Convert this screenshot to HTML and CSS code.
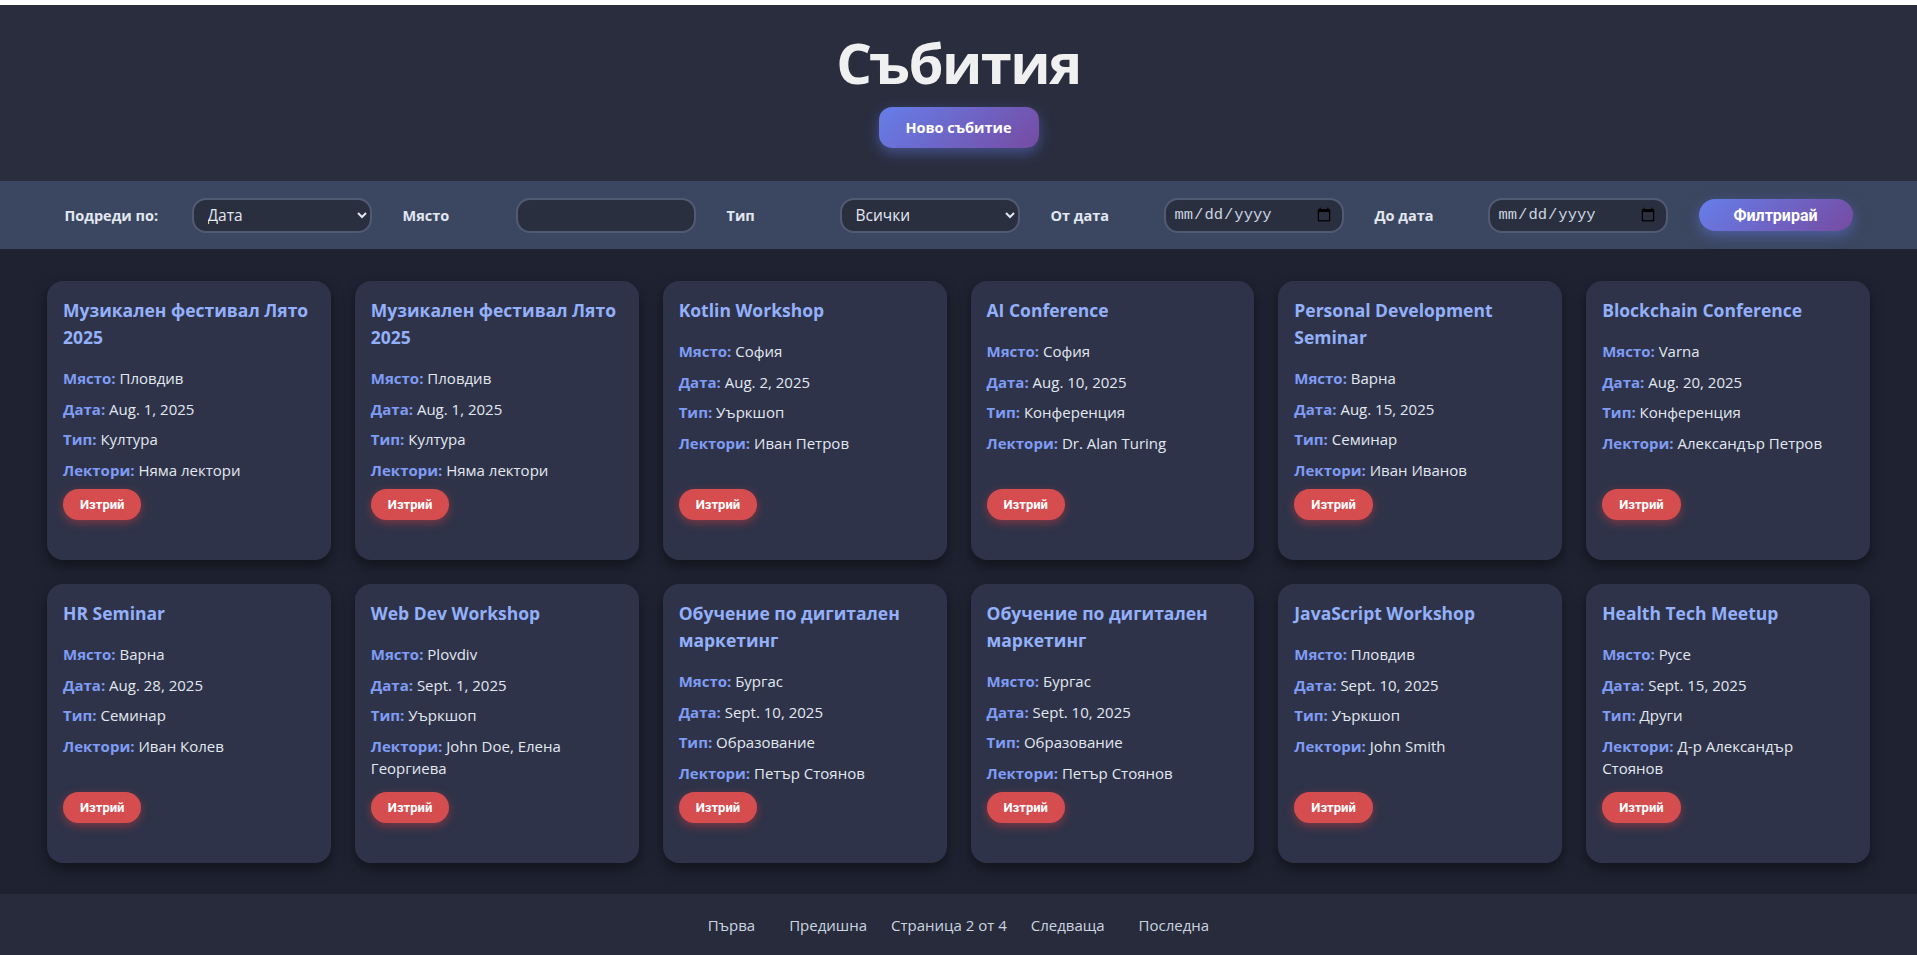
FILE: index.html
```html
<!DOCTYPE html>
<html lang="bg">
<head>
<meta charset="utf-8">
<title>Събития</title>
<link rel="stylesheet" href="styles.css">
</head>
<body>
<div class="page">
  <header class="hero">
    <h1 class="hero-title">Събития</h1>
    <button class="btn-gradient btn-new" type="button">Ново събитие</button>
  </header>

  <form class="filters">
    <label class="filter-label filter-label-first">Подреди по:</label>
    <select class="filter-field">
      <option>Дата</option>
    </select>
    <label class="filter-label">Място</label>
    <input class="filter-field" type="text">
    <label class="filter-label">Тип</label>
    <select class="filter-field">
      <option>Всички</option>
    </select>
    <label class="filter-label">От дата</label>
    <input class="filter-field filter-date" type="date">
    <label class="filter-label">До дата</label>
    <input class="filter-field filter-date" type="date">
    <button class="btn-gradient btn-filter" type="button">Филтрирай</button>
  </form>

  <main class="events">
    <article class="card">
      <h3 class="card-title">Музикален фестивал Лято 2025</h3>
      <p class="card-row"><b>Място:</b> Пловдив</p>
      <p class="card-row"><b>Дата:</b> Aug. 1, 2025</p>
      <p class="card-row"><b>Тип:</b> Култура</p>
      <p class="card-row"><b>Лектори:</b> Няма лектори</p>
      <button class="btn-delete" type="button">Изтрий</button>
    </article>
    <article class="card">
      <h3 class="card-title">Музикален фестивал Лято 2025</h3>
      <p class="card-row"><b>Място:</b> Пловдив</p>
      <p class="card-row"><b>Дата:</b> Aug. 1, 2025</p>
      <p class="card-row"><b>Тип:</b> Култура</p>
      <p class="card-row"><b>Лектори:</b> Няма лектори</p>
      <button class="btn-delete" type="button">Изтрий</button>
    </article>
    <article class="card">
      <h3 class="card-title">Kotlin Workshop</h3>
      <p class="card-row"><b>Място:</b> София</p>
      <p class="card-row"><b>Дата:</b> Aug. 2, 2025</p>
      <p class="card-row"><b>Тип:</b> Уъркшоп</p>
      <p class="card-row"><b>Лектори:</b> Иван Петров</p>
      <button class="btn-delete" type="button">Изтрий</button>
    </article>
    <article class="card">
      <h3 class="card-title">AI Conference</h3>
      <p class="card-row"><b>Място:</b> София</p>
      <p class="card-row"><b>Дата:</b> Aug. 10, 2025</p>
      <p class="card-row"><b>Тип:</b> Конференция</p>
      <p class="card-row"><b>Лектори:</b> Dr. Alan Turing</p>
      <button class="btn-delete" type="button">Изтрий</button>
    </article>
    <article class="card">
      <h3 class="card-title">Personal Development Seminar</h3>
      <p class="card-row"><b>Място:</b> Варна</p>
      <p class="card-row"><b>Дата:</b> Aug. 15, 2025</p>
      <p class="card-row"><b>Тип:</b> Семинар</p>
      <p class="card-row"><b>Лектори:</b> Иван Иванов</p>
      <button class="btn-delete" type="button">Изтрий</button>
    </article>
    <article class="card">
      <h3 class="card-title">Blockchain Conference</h3>
      <p class="card-row"><b>Място:</b> Varna</p>
      <p class="card-row"><b>Дата:</b> Aug. 20, 2025</p>
      <p class="card-row"><b>Тип:</b> Конференция</p>
      <p class="card-row"><b>Лектори:</b> Александър Петров</p>
      <button class="btn-delete" type="button">Изтрий</button>
    </article>

    <article class="card">
      <h3 class="card-title">HR Seminar</h3>
      <p class="card-row"><b>Място:</b> Варна</p>
      <p class="card-row"><b>Дата:</b> Aug. 28, 2025</p>
      <p class="card-row"><b>Тип:</b> Семинар</p>
      <p class="card-row"><b>Лектори:</b> Иван Колев</p>
      <button class="btn-delete" type="button">Изтрий</button>
    </article>
    <article class="card">
      <h3 class="card-title">Web Dev Workshop</h3>
      <p class="card-row"><b>Място:</b> Plovdiv</p>
      <p class="card-row"><b>Дата:</b> Sept. 1, 2025</p>
      <p class="card-row"><b>Тип:</b> Уъркшоп</p>
      <p class="card-row"><b>Лектори:</b> John Doe, Елена Георгиева</p>
      <button class="btn-delete" type="button">Изтрий</button>
    </article>
    <article class="card">
      <h3 class="card-title">Обучение по дигитален маркетинг</h3>
      <p class="card-row"><b>Място:</b> Бургас</p>
      <p class="card-row"><b>Дата:</b> Sept. 10, 2025</p>
      <p class="card-row"><b>Тип:</b> Образование</p>
      <p class="card-row"><b>Лектори:</b> Петър Стоянов</p>
      <button class="btn-delete" type="button">Изтрий</button>
    </article>
    <article class="card">
      <h3 class="card-title">Обучение по дигитален маркетинг</h3>
      <p class="card-row"><b>Място:</b> Бургас</p>
      <p class="card-row"><b>Дата:</b> Sept. 10, 2025</p>
      <p class="card-row"><b>Тип:</b> Образование</p>
      <p class="card-row"><b>Лектори:</b> Петър Стоянов</p>
      <button class="btn-delete" type="button">Изтрий</button>
    </article>
    <article class="card">
      <h3 class="card-title">JavaScript Workshop</h3>
      <p class="card-row"><b>Място:</b> Пловдив</p>
      <p class="card-row"><b>Дата:</b> Sept. 10, 2025</p>
      <p class="card-row"><b>Тип:</b> Уъркшоп</p>
      <p class="card-row"><b>Лектори:</b> John Smith</p>
      <button class="btn-delete" type="button">Изтрий</button>
    </article>
    <article class="card">
      <h3 class="card-title">Health Tech Meetup</h3>
      <p class="card-row"><b>Място:</b> Русе</p>
      <p class="card-row"><b>Дата:</b> Sept. 15, 2025</p>
      <p class="card-row"><b>Тип:</b> Други</p>
      <p class="card-row"><b>Лектори:</b> Д-р Александър Стоянов</p>
      <button class="btn-delete" type="button">Изтрий</button>
    </article>
  </main>

  <footer class="pager">
    <a class="pager-link" href="#">Първа</a>
    <a class="pager-link" href="#">Предишна</a>
    <span class="pager-current">Страница 2 от 4</span>
    <a class="pager-link" href="#">Следваща</a>
    <a class="pager-link" href="#">Последна</a>
  </footer>
</div>
</body>
</html>
```

FILE: styles.css
```css
html, body {
  margin: 0;
  padding: 0;
  background: #ffffff;
  overflow: hidden;
}

body {
  font-family: "Open Sans", "Noto Sans", sans-serif;
  color: #e2e8f0;
}

.page {
  margin-top: 5px;
  min-height: calc(100vh - 5px);
  display: flex;
  flex-direction: column;
  background: #1f2231;
}

/* ---------- header ---------- */
.hero {
  background: #292d3e;
  height: 176px;
  box-sizing: border-box;
  padding-top: 22px;
  display: flex;
  flex-direction: column;
  align-items: center;
}

.hero-title {
  margin: 0;
  font-size: 56px;
  line-height: 70px;
  font-weight: 700;
  color: #f0f0f0;
  letter-spacing: -1.5px;
}

.btn-gradient {
  border: none;
  color: #ffffff;
  font-family: "Open Sans", "Noto Sans", sans-serif;
  font-weight: 700;
  background: linear-gradient(135deg, #667eea 0%, #764ba2 100%);
  cursor: pointer;
}

.btn-new {
  margin-top: 10px;
  width: 160px;
  height: 41px;
  border-radius: 13px;
  font-size: 14.5px;
  box-shadow: 0 5px 14px rgba(102, 126, 234, 0.45);
}

/* ---------- filters ---------- */
.filters {
  background: #3b4660;
  height: 68px;
  display: flex;
  align-items: center;
  justify-content: center;
  gap: 31px;
}

.filter-label {
  width: 82px;
  font-size: 14.5px;
  font-weight: 700;
  color: #e2e8f0;
  white-space: nowrap;
}

.filter-label-first {
  width: 96px;
}

.filter-field {
  width: 180px;
  height: 35px;
  box-sizing: border-box;
  border: 2px solid #505b72;
  border-radius: 14px;
  background: #2a2f40;
  color: #e2e8f0;
  font-family: "Open Sans", "Noto Sans", sans-serif;
  font-size: 15.5px;
  padding: 0 10px;
  outline: none;
}

.filter-date {
  font-family: "Liberation Mono", "DejaVu Sans Mono", monospace;
  font-size: 15.5px;
  color: #cbd5e0;
  padding: 0 8px;
}

.btn-filter {
  width: 154px;
  height: 32px;
  border-radius: 16px;
  font-family: Roboto, "Liberation Sans", sans-serif;
  font-size: 16px;
  box-shadow: 0 5px 14px rgba(102, 126, 234, 0.45);
}

/* ---------- cards ---------- */
.events {
  display: grid;
  grid-template-columns: repeat(6, 1fr);
  gap: 24px;
  padding: 32px 47px 31px;
}

.card {
  background: #2e3349;
  border-radius: 16px;
  padding: 16px 16px 40px;
  display: flex;
  flex-direction: column;
  align-items: flex-start;
  box-shadow: 0 6px 14px rgba(0, 0, 0, 0.45);
}

.card-title {
  margin: 0 0 16px;
  font-size: 17.5px;
  line-height: 27px;
  font-weight: 700;
  color: #93b0fa;
}

.card-row {
  margin: 0 0 8px;
  font-size: 15px;
  line-height: 22.5px;
  color: #e2e8f0;
}

.card-row b {
  color: #7f9cf5;
  font-weight: 700;
}

.btn-delete {
  margin-top: auto;
  height: 31px;
  padding: 0 17px;
  border: none;
  border-radius: 16px;
  background: #d64d4f;
  color: #ffffff;
  font-family: Roboto, "Liberation Sans", sans-serif;
  font-weight: 700;
  font-size: 13px;
  box-shadow: 0 3px 10px rgba(229, 62, 62, 0.45);
  cursor: pointer;
}

/* ---------- pager ---------- */
.pager {
  background: #282b3b;
  flex: 1 0 62px;
  display: flex;
  align-items: center;
  justify-content: center;
  gap: 10px;
  font-size: 15px;
  color: #cbd5e0;
}

.pager-link {
  color: #cbd5e0;
  text-decoration: none;
  padding: 0 12px;
}

.pager-current {
  padding: 0 2px;
}
```
